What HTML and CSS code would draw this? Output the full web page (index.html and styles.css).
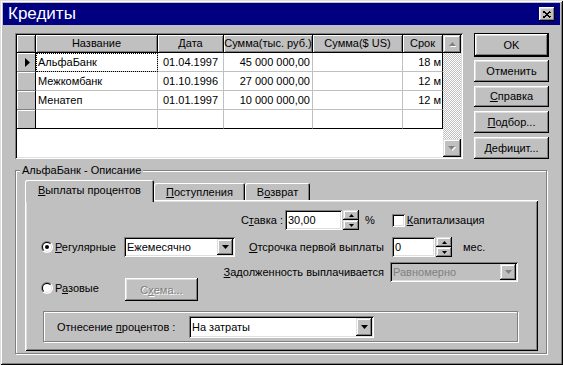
FILE: index.html
```html
<!DOCTYPE html>
<html>
<head>
<meta charset="utf-8">
<title>Кредиты</title>
<link rel="stylesheet" href="styles.css">
</head>
<body>
<div class="window">
  <div class="titlebar">
    <span class="title">Кредиты</span>
    <div class="close"><svg width="8" height="7" viewBox="0 0 8 7"><path d="M0.5 0.5L7.5 6.5M7.5 0.5L0.5 6.5" stroke="#000" stroke-width="1.6" shape-rendering="crispEdges"/></svg></div>
  </div>

  <div class="top">
    <div class="grid">
      <div class="grid-body">
        <table class="data">
          <colgroup>
            <col class="c-ind"><col class="c-name"><col class="c-date"><col class="c-sum"><col class="c-usd"><col class="c-term">
          </colgroup>
          <thead>
            <tr><th class="ind"></th><th>Название</th><th>Дата</th><th>Сумма(тыс. руб.)</th><th>Сумма($ US)</th><th>Срок</th></tr>
          </thead>
          <tbody>
            <tr>
              <td class="ind"><svg width="5" height="9" viewBox="0 0 5 9"><path d="M0 0L5 4.5L0 9z" fill="#000"/></svg></td>
              <td class="focus">АльфаБанк</td><td class="date">01.04.1997</td><td class="num">45 000 000,00</td><td class="num"></td><td class="term">18 м</td>
            </tr>
            <tr>
              <td class="ind"></td>
              <td>Межкомбанк</td><td class="date">01.10.1996</td><td class="num">27 000 000,00</td><td class="num"></td><td class="term">12 м</td>
            </tr>
            <tr>
              <td class="ind"></td>
              <td>Менатеп</td><td class="date">01.01.1997</td><td class="num">10 000 000,00</td><td class="num"></td><td class="term">12 м</td>
            </tr>
            <tr class="last">
              <td class="ind"></td>
              <td></td><td></td><td></td><td></td><td class="term"></td>
            </tr>
          </tbody>
        </table>
      </div>
      <div class="vscroll">
        <div class="sb-btn"><svg width="7" height="5" viewBox="0 0 7 5"><path d="M4.5 1L8 5H1z" fill="#fff"/><path d="M3.5 0L7 4H0z" fill="#808080"/></svg></div>
        <div class="sb-track"></div>
        <div class="sb-btn"><svg width="8" height="5" viewBox="0 0 8 5"><path d="M1 1h7L4.5 5z" fill="#fff"/><path d="M0 0h7L3.5 4z" fill="#808080"/></svg></div>
      </div>
    </div>

    <div class="buttons">
      <div class="btn default">OK</div>
      <div class="btn">Отменить</div>
      <div class="btn"><u>С</u>правка</div>
      <div class="btn"><u>П</u>одбор...</div>
      <div class="btn"><u>Д</u>ефицит...</div>
    </div>
  </div>

  <div class="group">
    <div class="group-title">АльфаБанк - Описание</div>
    <div class="tabs">
      <div class="tab active t1"><u>В</u>ыплаты процентов</div>
      <div class="tab t2"><u>П</u>оступления</div>
      <div class="tab t3">В<u>о</u>зврат</div>
    </div>
    <div class="panel">
      <div class="rate-row">
        <span class="rate-label">С<u>т</u>авка :</span>
        <div class="field rate-input">30,00</div>
        <div class="spin">
          <div class="spin-btn"><svg width="5" height="3" viewBox="0 0 5 3"><path d="M2.5 0L5 3H0z" fill="#000"/></svg></div>
          <div class="spin-btn"><svg width="5" height="3" viewBox="0 0 5 3"><path d="M0 0h5L2.5 3z" fill="#000"/></svg></div>
        </div>
        <span class="pct">%</span>
        <span class="check"></span>
        <span class="check-label"><u>К</u>апитализация</span>
      </div>

      <div class="opts">
        <div class="radio-item reg">
          <span class="radio on"><span class="radio-in"><span class="radio-dot"></span></span></span>
          <span><u>Р</u>егулярные</span>
        </div>
        <div class="combo month">
          <span class="combo-text">Ежемесячно</span>
          <span class="combo-btn"><svg width="7" height="4" viewBox="0 0 7 4"><path d="M0 0h7L3.5 4z" fill="#000"/></svg></span>
        </div>
        <span class="lbl lbl-delay"><u>О</u>тсрочка первой выплаты</span>
        <div class="delay-ctrl">
          <div class="field delay-input">0</div>
          <div class="spin">
            <div class="spin-btn"><svg width="5" height="3" viewBox="0 0 5 3"><path d="M2.5 0L5 3H0z" fill="#000"/></svg></div>
            <div class="spin-btn"><svg width="5" height="3" viewBox="0 0 5 3"><path d="M0 0h5L2.5 3z" fill="#000"/></svg></div>
          </div>
          <span class="months">мес.</span>
        </div>

        <span class="lbl lbl-debt"><u>З</u>адолженность выплачивается</span>
        <div class="combo disabled debt">
          <span class="combo-text">Равномерно</span>
          <span class="combo-btn"><svg width="7" height="4" viewBox="0 0 7 4"><path d="M0 0h7L3.5 4z" fill="#808080"/></svg></span>
        </div>

        <div class="radio-item once">
          <span class="radio"><span class="radio-in"><span class="radio-dot"></span></span></span>
          <span>Р<u>а</u>зовые</span>
        </div>
        <div class="btn schema">С<u>х</u>ема...</div>
      </div>

      <div class="inner">
        <span class="inner-label">Отнесение <u>п</u>роцентов :</span>
        <div class="combo costs">
          <span class="combo-text">На затраты</span>
          <span class="combo-btn"><svg width="7" height="4" viewBox="0 0 7 4"><path d="M0 0h7L3.5 4z" fill="#000"/></svg></span>
        </div>
      </div>
    </div>
  </div>
</div>
</body>
</html>
```

FILE: styles.css
```css
* { box-sizing: border-box; }
html, body { margin: 0; padding: 0; }
body {
  width: 563px;
  height: 365px;
  overflow: hidden;
  background: #c0c0c0;
  font-family: "Liberation Sans", Arial, sans-serif;
  font-size: 11px;
  color: #000;
}
u { text-decoration: underline; text-underline-offset: 1px; }

.window {
  width: 563px;
  height: 365px;
  padding: 3px;
  background: #c0c0c0;
  box-shadow: inset 1px 1px #dfdfdf, inset -1px -1px #000, inset 2px 2px #fff, inset -2px -2px #808080;
}

.titlebar {
  height: 22px;
  background: #000080;
  color: #fff;
  display: flex;
  align-items: center;
  justify-content: space-between;
  padding: 0 5px;
}
.title { font-size: 17px; line-height: 22px; }
.close {
  width: 16px;
  height: 14px;
  background: #c0c0c0;
  display: flex;
  align-items: center;
  justify-content: center;
  box-shadow: inset -1px -1px #000, inset 1px 1px #fff, inset -2px -2px #808080, inset 2px 2px #dfdfdf;
}

.raised, .btn, .sb-btn, .spin-btn, .combo-btn {
  background: #c0c0c0;
  box-shadow: inset -1px -1px #000, inset 1px 1px #fff, inset -2px -2px #808080, inset 2px 2px #dfdfdf;
}
.sb-btn, .spin-btn, .combo-btn {
  box-shadow: inset -1px -1px #000, inset 1px 1px #dfdfdf, inset -2px -2px #808080, inset 2px 2px #fff;
}

.top {
  display: flex;
  gap: 11px;
  height: 134px;
  padding: 8px 0 0 12px;
}

.grid {
  width: 448px;
  height: 126px;
  padding: 2px;
  display: flex;
  background: #fff;
  box-shadow: inset 1px 1px #808080, inset -1px -1px #fff, inset 2px 2px #000, inset -2px -2px #dfdfdf;
}
.grid-body { width: 426px; background: #fff; }

.data {
  width: 426px;
  table-layout: fixed;
  border-collapse: separate;
  border-spacing: 0;
}
.c-ind { width: 19px; }
.c-name { width: 122px; }
.c-date { width: 66px; }
.c-sum { width: 89px; }
.c-usd { width: 90px; }
.c-term { width: 40px; }

.data th, .data td {
  padding: 0;
  font-weight: normal;
  white-space: nowrap;
  overflow: hidden;
  line-height: 13px;
}
.data th {
  height: 18px;
  background: #c0c0c0;
  border-right: 1px solid #000;
  border-bottom: 1px solid #000;
  box-shadow: inset 1px 1px #fff, inset -1px -1px #808080;
  text-align: center;
}
.data td {
  height: 19px;
  padding: 0 2px;
  border-right: 1px solid #c0c0c0;
  border-bottom: 1px solid #c0c0c0;
}
.data td.ind {
  padding: 0 0 0 3px;
  background: #c0c0c0;
  border-right: 1px solid #000;
  border-bottom: 1px solid #808080;
  box-shadow: inset 1px 1px #fff;
  text-align: center;
}
.data td.ind svg { display: block; margin: 0 auto; }
.data td.term { border-right-color: #000; text-align: right; padding-right: 1px; }
.data tr.last td { border-bottom-color: #000; }
.data td.num { text-align: right; }
.data td.date { text-align: center; }
.data td.focus { outline: 1px dotted #000; outline-offset: -1px; }

.vscroll {
  width: 18px;
  display: flex;
  flex-direction: column;
  background: repeating-conic-gradient(#c0c0c0 0% 25%, #fff 0% 50%) 0 0 / 2px 2px;
}
.sb-btn {
  width: 18px;
  height: 18px;
  display: flex;
  align-items: center;
  justify-content: center;
}
.sb-track { flex: 1; }

.buttons {
  display: flex;
  flex-direction: column;
  gap: 4px;
  width: 75px;
}
.btn {
  height: 22px;
  display: flex;
  align-items: center;
  justify-content: center;
}
.btn.default { height: 24px; border: 1px solid #000; margin-bottom: -1px; }

.group {
  position: relative;
  margin: 11px 0 0 12px;
  width: 532px;
  height: 184px;
  border: 1px solid #808080;
  box-shadow: inset 1px 1px #fff, 1px 1px #fff;
  padding: 9px 0 0 9px;
}
.group-title {
  position: absolute;
  top: -7px;
  left: 4px;
  padding: 0 2px;
  background: #c0c0c0;
  line-height: 13px;
}

.tabs {
  position: relative;
  z-index: 1;
  display: flex;
  align-items: flex-end;
  height: 20px;
}
.tab {
  height: 17px;
  display: flex;
  align-items: center;
  justify-content: center;
  background: #c0c0c0;
  border-radius: 2px 2px 0 0;
  box-shadow: inset 1px 1px #fff, inset -1px 0 #000, inset -2px 0 #808080;
  padding-top: 1px;
}
.tab.active { height: 22px; margin-bottom: -2px; padding-bottom: 3px; }
.t1 { width: 129px; }
.t2 { width: 91px; }
.t3 { width: 65px; }

.panel {
  width: 513px;
  height: 151px;
  padding-top: 10px;
  box-shadow: inset 1px 1px #fff, inset -1px -1px #000, inset 2px 2px #dfdfdf, inset -2px -2px #808080;
}

.field {
  height: 20px;
  background: #fff;
  padding: 0 3px;
  display: flex;
  align-items: center;
  box-shadow: inset 1px 1px #808080, inset -1px -1px #fff, inset 2px 2px #000, inset -2px -2px #dfdfdf;
}

.rate-row {
  display: flex;
  align-items: center;
  height: 20px;
}
.rate-label { width: 258px; text-align: right; }
.rate-input { width: 57px; margin-left: 2px; }
.spin {
  width: 16px;
  height: 20px;
  margin-left: 1px;
  display: flex;
  flex-direction: column;
}
.spin-btn {
  height: 10px;
  display: flex;
  align-items: center;
  justify-content: center;
}
.spin-btn svg { display: block; }
.pct { margin-left: 6px; }
.check {
  width: 13px;
  height: 13px;
  margin-left: 17px;
  background: #fff;
  box-shadow: inset 1px 1px #808080, inset -1px -1px #fff, inset 2px 2px #000, inset -2px -2px #dfdfdf;
}
.check-label { margin-left: 2px; }

.opts {
  display: grid;
  grid-template-columns: 99px 111px 155px 1fr;
  grid-template-rows: 20px 20px 20px;
  row-gap: 5px;
  margin-top: 7px;
}
.radio-item {
  display: flex;
  align-items: center;
  gap: 2px;
  padding-left: 16px;
}
.radio {
  display: block;
  width: 12px;
  height: 12px;
  padding: 1px;
  border-radius: 50%;
  background: linear-gradient(135deg, #808080 50%, #fff 50%);
}
.radio-in {
  display: block;
  width: 10px;
  height: 10px;
  padding: 1px;
  border-radius: 50%;
  background: linear-gradient(135deg, #000 50%, #dfdfdf 50%);
}
.radio-dot {
  display: flex;
  width: 8px;
  height: 8px;
  border-radius: 50%;
  background: #fff;
  align-items: center;
  justify-content: center;
}
.radio.on .radio-dot::after {
  content: "";
  width: 4px;
  height: 4px;
  border-radius: 50%;
  background: #000;
}

.reg { grid-column: 1; grid-row: 1; }
.month { grid-column: 2; grid-row: 1; }
.lbl { align-self: center; justify-self: end; padding-right: 6px; white-space: nowrap; }
.lbl-delay { grid-column: 3; grid-row: 1; }
.delay-ctrl { grid-column: 4; grid-row: 1; display: flex; align-items: center; }
.delay-input { width: 43px; margin-left: 2px; }
.months { margin-left: 11px; }
.lbl-debt { grid-column: 2 / 4; grid-row: 2; }
.debt { grid-column: 4; grid-row: 2; width: 128px; }
.once { grid-column: 1; grid-row: 2 / 4; align-self: end; height: 23px; margin-bottom: 8px; }
.schema {
  grid-column: 2;
  grid-row: 2 / 4;
  align-self: end;
  width: 73px;
  height: 23px;
  margin: 0 0 6px 1px;
  color: #808080;
  text-shadow: 1px 1px #fff;
}

.combo {
  height: 20px;
  display: flex;
  align-items: stretch;
  padding: 2px;
  background: #fff;
  box-shadow: inset 1px 1px #808080, inset -1px -1px #fff, inset 2px 2px #000, inset -2px -2px #dfdfdf;
}
.combo-text {
  flex: 1;
  display: flex;
  align-items: center;
  padding-left: 1px;
}
.combo-btn {
  width: 16px;
  display: flex;
  align-items: center;
  justify-content: center;
}
.combo.disabled { background: #c0c0c0; color: #808080; }

.inner {
  margin: 4px 0 0 18px;
  width: 475px;
  height: 31px;
  border: 1px solid #808080;
  box-shadow: inset 1px 1px #fff, 1px 1px #fff;
  display: flex;
  align-items: center;
  padding-left: 13px;
}
.inner-label { width: 132px; }
.costs { width: 185px; height: 22px; }
```
